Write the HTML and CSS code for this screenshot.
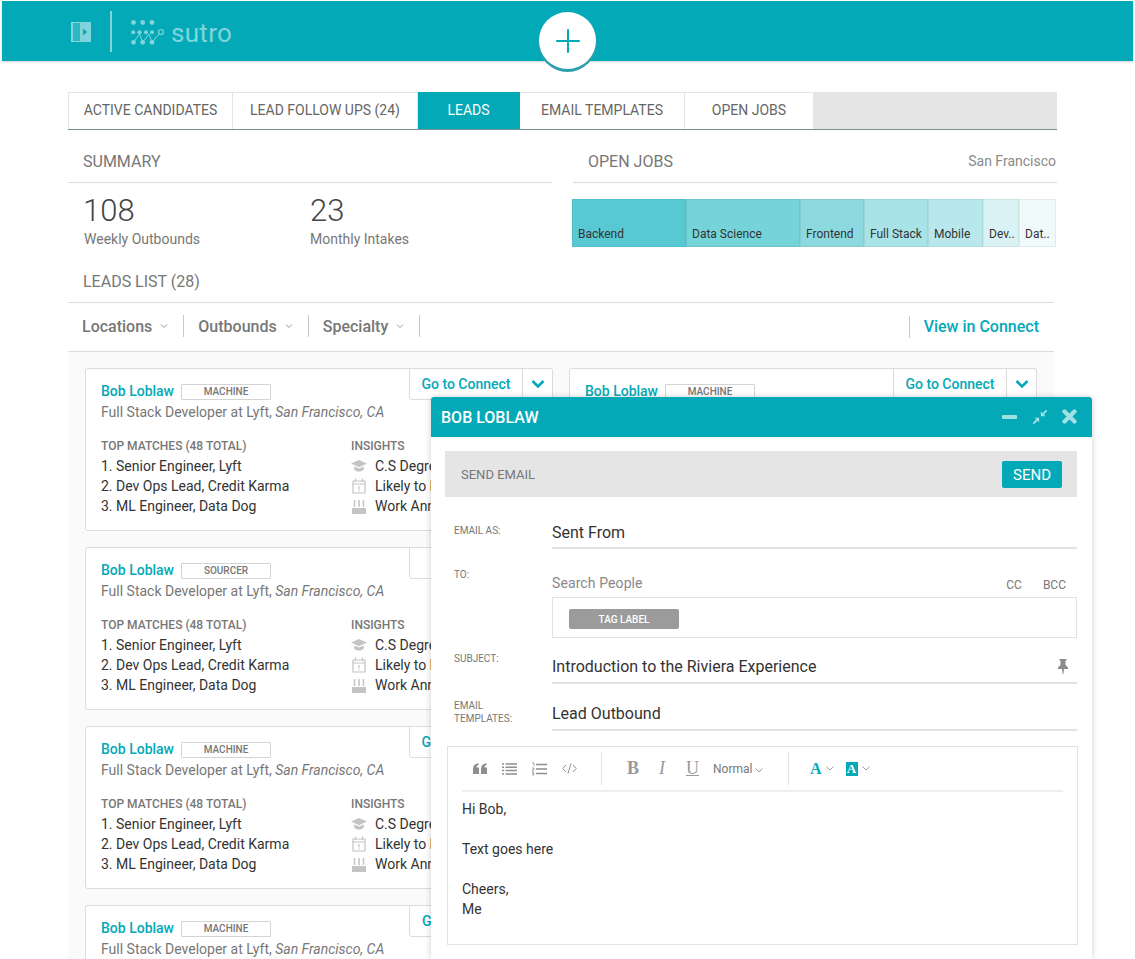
FILE: index.html
```html
<!DOCTYPE html>
<html lang="en">
<head>
    <meta charset="UTF-8">
    <meta name="viewport" content="width=device-width, initial-scale=1.0">
    <title>Sutro Leads</title>
    <link rel="stylesheet" href="styles.css">
</head>
<body>
    <header class="topbar">
        <svg class="panel-icon" width="20" height="20" viewBox="0 0 20 20"><path d="M0 0h20v20H0z" fill="#80d5dc"/><path d="M2 1h7v18H2z" fill="#2fb8c4"/><path d="M12 6.500l4 3.500-4 3.500z" fill="#03a9b7"/></svg>
        <span class="topbar-sep"></span>
        <svg class="logo-mark" width="34" height="26" viewBox="0 0 34 26" fill="#80d5dc">
            <circle cx="2.500" cy="2.500" r="2.400"/><circle cx="11.700" cy="2.500" r="2.400"/><circle cx="21" cy="2.500" r="2.400"/>
            <circle cx="2.200" cy="12.300" r="2"/><circle cx="8.500" cy="12.300" r="2"/><circle cx="15" cy="12.300" r="2"/><circle cx="21" cy="12.300" r="2"/>
            <circle cx="2.500" cy="22.300" r="2.400"/><circle cx="11.700" cy="22.300" r="2.400"/><circle cx="21" cy="22.300" r="2.400"/>
            <path d="M2.500 22.300L8.500 14l3.200 8.300L18 14l3 8.300L28 14" fill="none" stroke="#80d5dc"/>
            <circle cx="30" cy="12" r="2.500" fill="none" stroke="#80d5dc" stroke-width="1.200"/>
        </svg>
        <span class="logo-text">sutro</span>
        <button class="add-btn">
            <svg width="24" height="24" viewBox="0 0 24 24"><path d="M12 1v22M1 12h22" stroke="#03a9b7" stroke-width="2" stroke-linecap="round"/></svg>
        </button>
    </header>

    <main class="page">
        <nav class="tabs">
            <a class="tab tab-1">ACTIVE CANDIDATES</a>
            <a class="tab tab-2">LEAD FOLLOW UPS (24)</a>
            <a class="tab tab-3 active">LEADS</a>
            <a class="tab tab-4">EMAIL TEMPLATES</a>
            <a class="tab tab-5">OPEN JOBS</a>
        </nav>

        <section class="overview">
            <div class="summary">
                <h2 class="section-title">SUMMARY</h2>
                <div class="stats">
                    <div class="stat stat-first">
                        <div class="stat-num">108</div>
                        <div class="stat-label">Weekly Outbounds</div>
                    </div>
                    <div class="stat">
                        <div class="stat-num">23</div>
                        <div class="stat-label">Monthly Intakes</div>
                    </div>
                </div>
            </div>
            <div class="jobs">
                <h2 class="section-title jobs-title">OPEN JOBS <span class="jobs-city">San Francisco</span></h2>
                <div class="treemap">
                    <div class="cell c1">Backend</div>
                    <div class="cell c2">Data Science</div>
                    <div class="cell c3">Frontend</div>
                    <div class="cell c4">Full Stack</div>
                    <div class="cell c5">Mobile</div>
                    <div class="cell c6">Dev..</div>
                    <div class="cell c7">Dat..</div>
                </div>
            </div>
        </section>

        <h2 class="section-title list-title">LEADS LIST (28)</h2>
        <div class="filters">
            <span class="filter">Locations <svg class="caret" width="10" height="6" viewBox="0 0 10 6"><path d="M2 1.500l3 3 3-3" fill="none" stroke="#9a9a9a"/></svg></span>
            <span class="filter">Outbounds <svg class="caret" width="10" height="6" viewBox="0 0 10 6"><path d="M2 1.500l3 3 3-3" fill="none" stroke="#9a9a9a"/></svg></span>
            <span class="filter">Specialty <svg class="caret" width="10" height="6" viewBox="0 0 10 6"><path d="M2 1.500l3 3 3-3" fill="none" stroke="#9a9a9a"/></svg></span>
            <a class="connect-link">View in Connect</a>
        </div>

        <div class="cards">
            <div class="cards-col">
                <article class="card">
                    <div class="card-top">
                        <div class="card-name"><a class="name">Bob Loblaw</a><span class="source">MACHINE</span></div>
                        <div class="card-actions"><a class="go">Go to Connect</a><a class="more"><svg width="14" height="10" viewBox="0 0 14 10"><path d="M1.500 2l5.500 5.500L12.500 2" fill="none" stroke="#03a9b7" stroke-width="2.600"/></svg></a></div>
                    </div>
                    <p class="role">Full Stack Developer at Lyft, <em>San Francisco, CA</em></p>
                    <div class="card-cols">
                        <div class="matches">
                            <h3 class="mini-title">TOP MATCHES (48 TOTAL)</h3>
                            <div class="line">1. Senior Engineer, Lyft</div>
                            <div class="line">2. Dev Ops Lead, Credit Karma</div>
                            <div class="line">3. ML Engineer, Data Dog</div>
                        </div>
                        <div class="insights">
                            <h3 class="mini-title">INSIGHTS</h3>
                            <div class="line"><svg class="ins-icon" width="16" height="12" viewBox="0 0 16 12"><path d="M8 0L0 3.600l8 3.600 8-3.600z" fill="#c4c4c4"/><path d="M3.200 6.400v3C4.500 11 6 11.400 8 11.400s3.500-.4 4.800-2v-3L8 8.500z" fill="#c4c4c4"/></svg>C.S Degree</div>
                            <div class="line"><svg class="ins-icon" width="14" height="16" viewBox="0 0 14 16"><path d="M1 3h12v12H1z M1 6h12" fill="none" stroke="#c4c4c4" stroke-width="1.200"/><path d="M3.500 .5v3.500M10.500 .5v3.500M7 8v3.500M7 12.500v1" stroke="#c4c4c4" stroke-width="1.200"/></svg>Likely to bolt</div>
                            <div class="line"><svg class="ins-icon" width="14" height="15" viewBox="0 0 14 15"><path d="M0 9h14v6H0z" fill="#c4c4c4"/><path d="M2.500 1v7M7 1v7M11.500 1v7" stroke="#c4c4c4" stroke-width="1.500"/></svg>Work Anniv.</div>
                        </div>
                    </div>
                </article>
                <article class="card">
                    <div class="card-top">
                        <div class="card-name"><a class="name">Bob Loblaw</a><span class="source">SOURCER</span></div>
                        <div class="card-actions"><a class="go go-blank"></a></div>
                    </div>
                    <p class="role">Full Stack Developer at Lyft, <em>San Francisco, CA</em></p>
                    <div class="card-cols">
                        <div class="matches">
                            <h3 class="mini-title">TOP MATCHES (48 TOTAL)</h3>
                            <div class="line">1. Senior Engineer, Lyft</div>
                            <div class="line">2. Dev Ops Lead, Credit Karma</div>
                            <div class="line">3. ML Engineer, Data Dog</div>
                        </div>
                        <div class="insights">
                            <h3 class="mini-title">INSIGHTS</h3>
                            <div class="line"><svg class="ins-icon" width="16" height="12" viewBox="0 0 16 12"><path d="M8 0L0 3.600l8 3.600 8-3.600z" fill="#c4c4c4"/><path d="M3.200 6.400v3C4.500 11 6 11.400 8 11.400s3.500-.4 4.800-2v-3L8 8.500z" fill="#c4c4c4"/></svg>C.S Degree</div>
                            <div class="line"><svg class="ins-icon" width="14" height="16" viewBox="0 0 14 16"><path d="M1 3h12v12H1z M1 6h12" fill="none" stroke="#c4c4c4" stroke-width="1.200"/><path d="M3.500 .5v3.500M10.500 .5v3.500M7 8v3.500M7 12.500v1" stroke="#c4c4c4" stroke-width="1.200"/></svg>Likely to bolt</div>
                            <div class="line"><svg class="ins-icon" width="14" height="15" viewBox="0 0 14 15"><path d="M0 9h14v6H0z" fill="#c4c4c4"/><path d="M2.500 1v7M7 1v7M11.500 1v7" stroke="#c4c4c4" stroke-width="1.500"/></svg>Work Anniv.</div>
                        </div>
                    </div>
                </article>
                <article class="card">
                    <div class="card-top">
                        <div class="card-name"><a class="name">Bob Loblaw</a><span class="source">MACHINE</span></div>
                        <div class="card-actions"><a class="go">Go to Connect</a><a class="more"><svg width="14" height="10" viewBox="0 0 14 10"><path d="M1.500 2l5.500 5.500L12.500 2" fill="none" stroke="#03a9b7" stroke-width="2.600"/></svg></a></div>
                    </div>
                    <p class="role">Full Stack Developer at Lyft, <em>San Francisco, CA</em></p>
                    <div class="card-cols">
                        <div class="matches">
                            <h3 class="mini-title">TOP MATCHES (48 TOTAL)</h3>
                            <div class="line">1. Senior Engineer, Lyft</div>
                            <div class="line">2. Dev Ops Lead, Credit Karma</div>
                            <div class="line">3. ML Engineer, Data Dog</div>
                        </div>
                        <div class="insights">
                            <h3 class="mini-title">INSIGHTS</h3>
                            <div class="line"><svg class="ins-icon" width="16" height="12" viewBox="0 0 16 12"><path d="M8 0L0 3.600l8 3.600 8-3.600z" fill="#c4c4c4"/><path d="M3.200 6.400v3C4.500 11 6 11.400 8 11.400s3.500-.4 4.800-2v-3L8 8.500z" fill="#c4c4c4"/></svg>C.S Degree</div>
                            <div class="line"><svg class="ins-icon" width="14" height="16" viewBox="0 0 14 16"><path d="M1 3h12v12H1z M1 6h12" fill="none" stroke="#c4c4c4" stroke-width="1.200"/><path d="M3.500 .5v3.500M10.500 .5v3.500M7 8v3.500M7 12.500v1" stroke="#c4c4c4" stroke-width="1.200"/></svg>Likely to bolt</div>
                            <div class="line"><svg class="ins-icon" width="14" height="15" viewBox="0 0 14 15"><path d="M0 9h14v6H0z" fill="#c4c4c4"/><path d="M2.500 1v7M7 1v7M11.500 1v7" stroke="#c4c4c4" stroke-width="1.500"/></svg>Work Anniv.</div>
                        </div>
                    </div>
                </article>
                <article class="card card-cut">
                    <div class="card-top">
                        <div class="card-name"><a class="name">Bob Loblaw</a><span class="source">MACHINE</span></div>
                        <div class="card-actions"><a class="go go-short">Go</a></div>
                    </div>
                    <p class="role">Full Stack Developer at Lyft, <em>San Francisco, CA</em></p>
                </article>
            </div>
            <div class="cards-col">
                <article class="card">
                    <div class="card-top">
                        <div class="card-name"><a class="name">Bob Loblaw</a><span class="source">MACHINE</span></div>
                        <div class="card-actions"><a class="go">Go to Connect</a><a class="more"><svg width="14" height="10" viewBox="0 0 14 10"><path d="M1.500 2l5.500 5.500L12.500 2" fill="none" stroke="#03a9b7" stroke-width="2.600"/></svg></a></div>
                    </div>
                </article>
            </div>
        </div>
    </main>

    <aside class="composer">
        <div class="composer-head">
            <span class="composer-name">BOB LOBLAW</span>
            <svg class="head-icon" width="16" height="16" viewBox="0 0 16 16"><rect x="0" y="6" width="15" height="4" rx="1" fill="#a3e0e5"/></svg>
            <svg class="head-icon" width="16" height="16" viewBox="0 0 16 16"><path d="M8.800 7.200V2.500l1.700 1.700L14 .7 15.300 2l-3.500 3.500 1.700 1.700zM7.200 8.800v4.700l-1.700-1.700L2 15.300.7 14l3.500-3.500-1.700-1.700z" fill="#a3e0e5"/></svg>
            <svg class="head-icon" width="16" height="16" viewBox="0 0 16 16"><path d="M2.500 2.500l10 10M12.500 2.500l-10 10" stroke="#a3e0e5" stroke-width="4.200" stroke-linecap="round"/></svg>
        </div>
        <div class="composer-body">
            <div class="send-bar">
                <span class="send-title">SEND EMAIL</span>
                <button class="send-btn">SEND</button>
            </div>

            <div class="field field-as">
                <label class="field-label">EMAIL AS:</label>
                <div class="field-value">Sent From</div>
            </div>

            <div class="field field-to">
                <label class="field-label">TO:</label>
                <div class="to-wrap">
                    <div class="to-row">
                        <span class="to-search">Search People</span>
                        <span class="to-cc">CC</span>
                        <span class="to-cc">BCC</span>
                    </div>
                    <div class="tag-box"><span class="tag">TAG LABEL</span></div>
                </div>
            </div>

            <div class="field field-subject">
                <label class="field-label">SUBJECT:</label>
                <div class="field-value">Introduction to the Riviera Experience
                    <svg class="pin" width="12" height="15" viewBox="0 0 12 15"><path d="M2.500 0h7v1.500H8.500V6l2.500 2.500V10H7l-.6 5h-.8L5 10H1V8.500L3.500 6V1.500h-1z" fill="#8c8c8c"/></svg>
                </div>
            </div>

            <div class="field field-tpl">
                <label class="field-label">EMAIL<br>TEMPLATES:</label>
                <div class="field-value">Lead Outbound</div>
            </div>

            <div class="editor">
                <div class="toolbar">
                    <div class="tool-group group-a">
                        <svg width="14" height="11" viewBox="0 0 14 11"><path d="M0 6C0 3 1.500 1 5.500 0v2C4 2.500 3.500 3.300 3.500 4.500H6V11H0zM8 6c0-3 1.500-5 5.500-6v2C12 2.500 11.500 3.300 11.500 4.500H14V11H8z" fill="#8f8f8f"/></svg>
                        <svg width="15" height="12" viewBox="0 0 15 12"><path d="M0 1h2M3.500 1H15M0 4.300h2M3.500 4.300H15M0 7.600h2M3.500 7.600H15M0 11h2M3.500 11H15" stroke="#8f8f8f" stroke-width="1.500"/></svg>
                        <svg width="15" height="14" viewBox="0 0 15 14"><path d="M4 2.500h11M4 7h11M4 11.500h11" stroke="#8f8f8f" stroke-width="1.500"/><path d="M0 1h2v3M0 6h2v2H0v2h2M0 11h2v2H0" fill="none" stroke="#8f8f8f" stroke-width=".8"/></svg>
                        <svg width="15" height="11" viewBox="0 0 15 11"><path d="M4 2L.8 5.500 4 9M11 2l3.200 3.500L11 9M9 .5L6 10.500" fill="none" stroke="#8f8f8f"/></svg>
                    </div>
                    <div class="tool-group group-b">
                        <span class="fmt fmt-b">B</span>
                        <span class="fmt fmt-i">I</span>
                        <span class="fmt fmt-u">U</span>
                        <span class="fmt-size">Normal <svg width="8" height="5" viewBox="0 0 8 5"><path d="M.5 .5L4 4 7.500 .5" fill="none" stroke="#9a9a9a"/></svg></span>
                    </div>
                    <div class="tool-group group-c">
                        <span class="color-a">A</span><svg width="8" height="5" viewBox="0 0 8 5"><path d="M.5 .5L4 4 7.500 .5" fill="none" stroke="#9a9a9a"/></svg>
                        <span class="color-bg">A</span><svg width="8" height="5" viewBox="0 0 8 5"><path d="M.5 .5L4 4 7.500 .5" fill="none" stroke="#9a9a9a"/></svg>
                    </div>
                </div>
                <div class="editor-text">
                    <p>Hi Bob,</p>
                    <p>Text goes here</p>
                    <p>Cheers,<br>Me</p>
                </div>
            </div>
        </div>
    </aside>
</body>
</html>
```

FILE: styles.css
```css
* {
    box-sizing: border-box;
}

html, body {
    margin: 0;
    height: 959px;
    overflow: hidden;
}

body {
    font-family: Roboto, "Liberation Sans", sans-serif;
    background-color: #fff;
    color: #333;
    position: relative;
}

h2, h3, p {
    margin: 0;
    font-weight: normal;
}

/* top bar */
.topbar {
    height: 60px;
    margin: 1px 2px 0 2px;
    background-color: #03a9b7;
    box-shadow: 0 1px 2px rgba(0, 0, 0, 0.2);
    display: flex;
    align-items: center;
    position: relative;
}

.panel-icon {
    margin: 2px 0 0 69px;
}

.topbar-sep {
    width: 2px;
    height: 41px;
    background-color: #80d5dc;
    margin-left: 19px;
}

.logo-mark {
    margin: 4px 0 0 19px;
}

.logo-text {
    font-size: 26px;
    letter-spacing: 0.3px;
    color: #80d5dc;
    margin: 3px 0 0 6px;
}

.add-btn {
    position: absolute;
    left: 537px;
    top: 11px;
    width: 57px;
    height: 57px;
    border-radius: 50%;
    border: none;
    background-color: #fff;
    box-shadow: 0 2px 0 1px #2ba0ac;
    display: flex;
    align-items: center;
    justify-content: center;
    padding: 0;
}

/* tabs */
.page {
    padding: 31px 0 0 68px;
}

.tabs {
    width: 989px;
    height: 38px;
    display: flex;
    background-color: #e5e5e5;
    border-bottom: 1px solid #7a8f92;
}

.tab {
    background-color: #fff;
    border-top: 1px solid #e5e5e5;
    border-right: 1px solid #e5e5e5;
    display: flex;
    align-items: center;
    justify-content: center;
    padding-bottom: 2px;
    font-size: 14px;
    color: #666;
}

.tab-1 { width: 165px; border-left: 1px solid #e5e5e5; }
.tab-2 { width: 185px; }
.tab-3 { width: 102px; }
.tab-4 { width: 165px; }
.tab-5 { width: 128px; border-right: none; }

.tab.active {
    background-color: #03a9b7;
    color: #fff;
    border-color: #03a9b7;
}

/* summary + jobs */
.overview {
    display: flex;
}

.section-title {
    font-size: 16px;
    color: #777;
    height: 53px;
    line-height: 63px;
    padding-left: 15px;
    border-bottom: 1px solid #dcdcdc;
}

.summary {
    width: 484px;
}

.jobs {
    width: 484px;
    margin-left: 21px;
}

.jobs-title {
    display: flex;
    justify-content: space-between;
    padding-right: 1px;
}

.jobs-city {
    font-size: 14px;
    color: #8a8a8a;
}

.stats {
    display: flex;
    padding: 10px 0 0 15px;
}

.stat-first {
    width: 227px;
}

.stat-num {
    font-size: 31px;
    font-weight: 300;
    line-height: 36px;
    color: #444;
}

.stat-label {
    font-size: 14px;
    line-height: 20px;
    color: #777;
}

.stat-first .stat-label {
    margin-left: 1px;
}

.treemap {
    display: flex;
    height: 48px;
    margin: 16px 0 0 -1px;
}

.cell {
    display: flex;
    align-items: flex-end;
    padding: 0 0 5px 5px;
    font-size: 12px;
    line-height: 14px;
    color: #333;
    border: 1px solid rgba(0, 0, 0, 0.06);
    white-space: nowrap;
    overflow: hidden;
}

.c1 { width: 114px; background-color: #58c9d3; }
.c2 { width: 114px; background-color: #75d3da; }
.c3 { width: 64px; background-color: #8cd9df; }
.c4 { width: 64px; background-color: #a8e3e7; }
.c5 { width: 55px; background-color: #b8e8eb; }
.c6 { width: 36px; background-color: #d9f3f5; }
.c7 { width: 37px; background-color: #f0fafb; }

/* filters */
.list-title {
    width: 986px;
    height: 54px;
    line-height: 66px;
}

.filters {
    width: 986px;
    height: 49px;
    display: flex;
    align-items: center;
    padding: 0 0 2px 14px;
    border-bottom: 1px solid #dcdcdc;
    font-size: 16px;
    font-weight: 500;
}

.filter {
    color: #777;
    height: 22px;
    display: flex;
    align-items: center;
    padding-right: 14px;
    margin-right: 14px;
    border-right: 1px solid #c8c8c8;
}

.caret {
    margin-left: 7px;
}

.connect-link {
    margin: 2px 15px 0 auto;
    color: #03a9b7;
    height: 22px;
    line-height: 22px;
    padding-left: 14px;
    border-left: 1px solid #c8c8c8;
}

/* cards */
.cards {
    width: 986px;
    height: 608px;
    overflow: hidden;
    display: flex;
    gap: 16px;
    padding: 16px 0 0 17px;
    background-color: #fafafa;
}

.cards-col {
    width: 468px;
    display: flex;
    flex-direction: column;
    gap: 16px;
}

.card {
    height: 163px;
    flex-shrink: 0;
    background-color: #fff;
    border: 1px solid #dcdcdc;
    border-radius: 3px;
    padding: 0 0 0 15px;
}

.card-cut {
    height: 60px;
    border-bottom: none;
}

.card-top {
    display: flex;
    justify-content: space-between;
    margin-top: -1px;
    height: 33px;
}

.card-name {
    display: flex;
    align-items: center;
    padding-top: 12px;
    height: 33px;
}

.name {
    font-size: 14px;
    font-weight: 500;
    color: #03a9b7;
}

.source {
    width: 90px;
    height: 16px;
    margin: 2px 0 0 7px;
    border: 1px solid #d4d4d4;
    border-radius: 1px;
    font-size: 10px;
    font-weight: 500;
    line-height: 14px;
    text-align: center;
    color: #777;
}

.card-actions {
    display: flex;
    height: 32px;
    margin-right: -1px;
    background-color: #fff;
    border: 1px solid #dcdcdc;
    border-radius: 0 3px 0 3px;
}

.go {
    width: 112px;
    font-size: 14px;
    font-weight: 500;
    line-height: 30px;
    text-align: center;
    color: #03a9b7;
}

.go-blank {
    width: 142px;
}

.go-short {
    width: 142px;
    padding-left: 12px;
    text-align: left;
}

.more {
    width: 30px;
    border-left: 1px solid #dcdcdc;
    display: flex;
    align-items: center;
    justify-content: center;
}

.role {
    font-size: 14px;
    line-height: 20px;
    color: #777;
    margin-top: 1px;
}

.card-cols {
    display: flex;
    margin-top: 14px;
}

.matches {
    width: 250px;
}

.mini-title {
    font-size: 12px;
    font-weight: 500;
    line-height: 20px;
    color: #777;
}

.line {
    font-size: 14px;
    line-height: 20px;
    color: #333;
    display: flex;
    align-items: center;
    white-space: nowrap;
}

.ins-icon {
    width: 24px;
    padding-right: 8px;
}

/* compose window */
.composer {
    position: absolute;
    left: 431px;
    top: 397px;
    width: 661px;
    height: 562px;
    background-color: #fff;
    border-radius: 3px 3px 0 0;
    box-shadow: 0 0 6px rgba(0, 0, 0, 0.2);
}

.composer-head {
    height: 40px;
    background-color: #03a9b7;
    border-radius: 3px 3px 0 0;
    display: flex;
    align-items: center;
    padding: 0 14px 0 10px;
    gap: 14px;
}

.composer-name {
    font-size: 16px;
    font-weight: 500;
    color: #fff;
    margin-right: auto;
}

.composer-body {
    padding: 14px 15px 0 14px;
}

.send-bar {
    height: 46px;
    background-color: #e5e5e5;
    display: flex;
    align-items: center;
    justify-content: space-between;
    padding: 0 15px 0 16px;
    font-size: 13px;
    color: #777;
}

.send-title {
    padding-top: 1px;
}

.send-btn {
    width: 60px;
    height: 27px;
    border: none;
    border-radius: 2px;
    background-color: #03a9b7;
    color: #fff;
    font-family: inherit;
    font-size: 15px;
    padding: 1px 0 0 0;
}

.field {
    display: flex;
}

.field-label {
    width: 107px;
    flex-shrink: 0;
    padding-left: 9px;
    font-size: 10px;
    line-height: 13px;
    color: #777;
}

.field-value {
    flex: 1;
    height: 31px;
    font-size: 16px;
    line-height: 30px;
    color: #333;
    border-bottom: 2px solid #e2e2e2;
    display: flex;
    justify-content: space-between;
    align-items: center;
}

.field-as {
    margin-top: 21px;
}

.field-as .field-label {
    padding-top: 6px;
}

.field-to {
    margin-top: 19px;
}

.to-wrap {
    flex: 1;
}

.to-row {
    display: flex;
    align-items: flex-end;
    height: 29px;
}

.to-search {
    font-size: 14px;
    letter-spacing: 0.1px;
    line-height: 23px;
    padding-bottom: 2px;
    color: #888;
    margin-right: auto;
}

.to-cc {
    font-size: 12px;
    line-height: 18px;
    padding-bottom: 3px;
    color: #777;
    margin: 0 11px 0 10px;
}

.tag-box {
    height: 41px;
    border: 1px solid #e2e2e2;
    padding: 11px 0 0 16px;
}

.tag {
    display: block;
    width: 110px;
    height: 20px;
    background-color: #9b9b9b;
    border-radius: 2px;
    font-size: 10px;
    font-weight: 500;
    line-height: 22px;
    text-align: center;
    color: #fff;
}

.field-subject {
    margin-top: 14px;
}

.field-subject .field-value,
.field-tpl .field-value {
    height: 32px;
    padding-bottom: 1px;
}

.pin {
    margin-right: 8px;
}

.field-tpl {
    margin-top: 15px;
}

.editor {
    width: 631px;
    height: 199px;
    margin: 15px 0 0 2px;
    border: 1px solid #e2e2e2;
}

.toolbar {
    height: 45px;
    margin: 0 14px;
    border-bottom: 2px solid #eee;
    display: flex;
    align-items: center;
    padding-bottom: 2px;
}

.tool-group {
    display: flex;
    align-items: center;
    height: 33px;
    margin-top: 2px;
    border-right: 1px solid #e2e2e2;
}

.group-a {
    width: 140px;
    gap: 15px;
    padding-left: 11px;
}

.group-b {
    width: 187px;
    padding-left: 25px;
}

.group-c {
    border-right: none;
    padding-left: 21px;
    gap: 4px;
}

.fmt {
    font-family: "Liberation Serif", serif;
    font-size: 18px;
    color: #999;
}

.fmt-b { font-weight: bold; width: 32px; }
.fmt-i { font-style: italic; width: 27px; }
.fmt-u { text-decoration: underline; width: 27px; }

.fmt-size {
    font-size: 12px;
    color: #777;
    white-space: nowrap;
}

.color-a {
    font-family: "Liberation Serif", serif;
    font-weight: bold;
    font-size: 16px;
    color: #03a9b7;
}

.color-bg {
    font-family: "Liberation Serif", serif;
    font-weight: bold;
    font-size: 13px;
    line-height: 14px;
    width: 12px;
    text-align: center;
    background-color: #03a9b7;
    color: #fff;
    margin-left: 8px;
}

.editor-text {
    padding: 7px 14px;
    font-size: 14px;
    line-height: 20px;
    color: #333;
}

.editor-text p {
    margin-bottom: 20px;
}
```
